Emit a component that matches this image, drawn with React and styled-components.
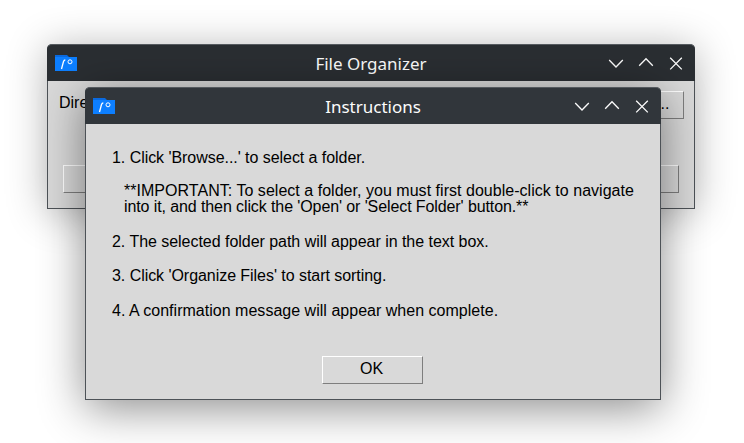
import React from 'react'
import styled, { createGlobalStyle } from 'styled-components'

const GlobalStyle = createGlobalStyle`
html, body {
  margin: 0;
  padding: 0;
  background: #ffffff;
  overflow: hidden;
}
`

const Desktop = styled.div`
  position: relative;
  width: 744px;
  height: 443px;
  overflow: hidden;
  background: #ffffff;
  font-family: "Liberation Sans", Arial, sans-serif;
  font-size: 16px;
  color: #000000;
`

const Window = styled.div`
  position: absolute;
  left: ${(p) => p.$left}px;
  top: ${(p) => p.$top}px;
  width: ${(p) => p.$width}px;
  height: ${(p) => p.$height}px;
  box-sizing: border-box;
  display: flex;
  flex-direction: column;
  background: #d9d9d9;
  border: 1px solid #4d5257;
  border-top: none;
  border-radius: 5px 5px 0 0;
  box-shadow: ${(p) => p.$shadow};
`

const TitleBar = styled.div`
  flex: none;
  box-sizing: border-box;
  height: 37px;
  display: grid;
  grid-template-columns: 1fr auto 1fr;
  align-items: center;
  padding: 0 11px 0 8px;
  margin: 0 -1px;
  background: ${(p) => p.$bg};
  border-top: 1px solid #555a5f;
  border-radius: 5px 5px 0 0;
  color: #fcfcfc;
  font-family: "Noto Sans", sans-serif;
  font-size: 17px;
`

const Title = styled.div`
  text-align: center;
  padding-left: 3px;
`

const Controls = styled.div`
  display: flex;
  gap: 14px;
  justify-self: end;
`

const Control = styled.svg`
  width: 16px;
  height: 16px;
  fill: none;
  stroke: #fcfcfc;
  stroke-width: 1.3;
  display: block;
`

const IconSlot = styled.svg`
  display: block;
`

const AppIcon = () => (
  <IconSlot width="22" height="16" viewBox="0 0 22 16">
    <path d="M0 0h12l2 2h8v14H0z" fill="#0a6ae0" />
    <path d="M0 2h22v14H0z" fill="#0d7fff" />
    <path d="M6.500 14 8.500 6.500Q9 5 10.300 5" stroke="#ffffff" strokeWidth="1.300" fill="none" />
    <circle cx="15" cy="6.800" r="2" stroke="#ffffff" strokeWidth="1" fill="none" />
  </IconSlot>
)

const WindowControls = () => (
  <Controls>
    <Control viewBox="0 0 16 16"><path d="M1.200 5 8 12 14.800 5" /></Control>
    <Control viewBox="0 0 16 16"><path d="M1.200 10.800 8 3.800 14.800 10.800" /></Control>
    <Control viewBox="0 0 16 16"><path d="M2.200 2.800l11.600 11.600M13.800 2.800 2.200 14.400" /></Control>
  </Controls>
)

const OrganizerBody = styled.div`
  flex: 1;
  display: flex;
  flex-direction: column;
  justify-content: space-between;
  padding: 10px 10px 15px 11px;
`

const FieldRow = styled.div`
  display: flex;
  align-items: flex-start;
  gap: 12px;
`

const Label = styled.span`
  flex: none;
  padding-top: 3px;
`

const PathInput = styled.div`
  flex: 1;
  height: 24px;
  background: #ffffff;
`

const Button = styled.div`
  box-sizing: border-box;
  width: ${(p) => p.$width};
  height: 28px;
  padding: 0 2px 3px 0;
  display: flex;
  align-items: center;
  justify-content: center;
  border: 1px solid;
  border-color: #ffffff #7e7e7e #7e7e7e #ffffff;
  background: #d9d9d9;
`

const WideButtonRow = styled.div`
  padding: 0 5px 0 4px;
`

const Steps = styled.div`
  flex: 1;
  display: flex;
  flex-direction: column;
  padding: 26px 26px 0 26px;
  line-height: 16px;
`

const Step = styled.div`
  margin-top: ${(p) => p.$gap || 0}px;
  padding-left: ${(p) => (p.$note ? 12 : 0)}px;
`

const Line = styled.div`
  white-space: nowrap;
  letter-spacing: ${(p) => p.$track || 0}px;
`

const Footer = styled.div`
  display: flex;
  justify-content: center;
  padding: 0 1px 15px 0;
`

const frontShadow = '0 8px 46px rgba(0, 0, 0, 0.46)'
const backShadow = '0 4px 40px rgba(0, 0, 0, 0.3)'

export default function App() {
  return (
    <Desktop>
      <GlobalStyle />
      <Window $left={47} $top={44} $width={648} $height={165} $shadow={backShadow}>
        <TitleBar $bg="#2a2e32">
          <AppIcon />
          <Title>File Organizer</Title>
          <WindowControls />
        </TitleBar>
        <OrganizerBody>
          <FieldRow>
            <Label>Directory:</Label>
            <PathInput />
            <Button $width="94px">Browse...</Button>
          </FieldRow>
          <WideButtonRow>
            <Button $width="100%">Organize Files</Button>
          </WideButtonRow>
        </OrganizerBody>
      </Window>
      <Window $left={85} $top={87} $width={576} $height={313} $shadow={frontShadow}>
        <TitleBar $bg="#31363b">
          <AppIcon />
          <Title>Instructions</Title>
          <WindowControls />
        </TitleBar>
        <Steps>
          <Step><Line $track={-0.05}>1. Click 'Browse...' to select a folder.</Line></Step>
          <Step $note $gap={17}>
            <Line $track={0.03}>**IMPORTANT: To select a folder, you must first double-click to navigate</Line>
            <Line $track={-0.1}>into it, and then click the 'Open' or 'Select Folder' button.**</Line>
          </Step>
          <Step $gap={19}><Line $track={-0.035}>2. The selected folder path will appear in the text box.</Line></Step>
          <Step $gap={18}><Line $track={-0.05}>3. Click 'Organize Files' to start sorting.</Line></Step>
          <Step $gap={19}><Line $track={0.02}>4. A confirmation message will appear when complete.</Line></Step>
        </Steps>
        <Footer>
          <Button $width="101px">OK</Button>
        </Footer>
      </Window>
    </Desktop>
  )
}
